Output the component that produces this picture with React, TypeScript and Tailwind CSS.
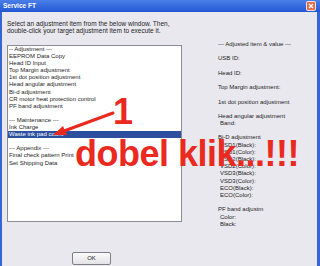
const listItems: { text: string; selected?: boolean }[] = [
  { text: "-- Adjustment ---" },
  { text: "EEPROM Data Copy" },
  { text: "Head ID Input" },
  { text: "Top Margin adjustment" },
  { text: "1st dot position adjustment" },
  { text: "Head angular adjustment" },
  { text: "Bi-d adjustment" },
  { text: "CR motor heat protection control" },
  { text: "PF band adjustment" },
  { text: "" },
  { text: "--- Maintenance ---" },
  { text: "Ink Charge" },
  { text: "Waste ink pad count", selected: true },
  { text: "" },
  { text: "--- Appendix ---" },
  { text: "Final check pattern Print" },
  { text: "Set Shipping Data" },
];

// indent: 0 = flush, 1 = slightly indented
const valueLines: [string, number][] = [
  ["--- Adjusted item & value ---", 0],
  ["", 0],
  ["USB ID:", 0],
  ["", 0],
  ["Head ID:", 0],
  ["", 0],
  ["Top Margin adjustment:", 0],
  ["", 0],
  ["1st dot position adjustment", 0],
  ["", 0],
  ["Head angular adjustment", 0],
  ["Band:", 1],
  ["", 0],
  ["Bi-D adjustment", 0],
  ["VSD1(Black):", 1],
  ["VSD1(Color):", 1],
  ["VSD2(Black):", 1],
  ["VSD2(Color):", 1],
  ["VSD3(Black):", 1],
  ["VSD3(Color):", 1],
  ["ECO(Black):", 1],
  ["ECO(Color):", 1],
  ["", 0],
  ["PF band adjustm", 0],
  ["Color:", 1],
  ["Black:", 1],
];

function CloseButton() {
  return (
    <div className="w-[10px] h-[10px] rounded-[2px] border border-white/80 bg-[#dd6a48] flex items-center justify-center">
      <svg width="6" height="6" viewBox="0 0 6 6">
        <path d="M1 1L5 5M5 1L1 5" stroke="white" strokeWidth="1.4" />
      </svg>
    </div>
  );
}

export default function App() {
  return (
    <div className="relative w-[320px] h-[266px] overflow-hidden bg-[#e9e8ee] font-['Liberation_Sans',Arial,sans-serif] text-[#1e1e1e]">
      {/* title bar */}
      <div className="h-[12px] flex items-center justify-between pl-[3px] pr-[4px] bg-gradient-to-b from-[#4a7fea] to-[#2356d2]">
        <span className="text-[6.5px] font-bold text-white leading-none">Service FT</span>
        <CloseButton />
      </div>

      <div className="h-[254px] flex flex-col border-l-[2px] border-r-[3px] border-[#3566d8] pl-[5px] pt-[8px]">
        <p className="text-[6.5px] leading-[7px] whitespace-nowrap">
          Select an adjustment item from the below window. Then,
          <br />
          double-click your target adjustment item to execute it.
        </p>

        <div className="flex items-start mt-[7px]">
          <div className="mt-[4px] w-[175px] h-[177px] bg-white border border-[#8a8d97] text-[6px] leading-[7.1px]">
            {listItems.map((item, i) => (
              <div
                key={i}
                className={
                  item.selected
                    ? "h-[7.1px] pl-[1px] bg-[#2c4f9e] text-white whitespace-nowrap"
                    : "h-[7.1px] pl-[1px] whitespace-nowrap"
                }
              >
                {item.text}
              </div>
            ))}
          </div>

          <div className="ml-[36px] text-[6px] leading-[7.2px]">
            {valueLines.map(([t, indent], i) => (
              <div key={i} className={indent ? "h-[7.2px] pl-[2px] whitespace-nowrap" : "h-[7.2px] whitespace-nowrap"}>
                {t}
              </div>
            ))}
          </div>
        </div>

        <button className="mt-[24px] ml-[65px] w-[39px] h-[13px] border border-[#7d7f88] rounded-[2px] bg-gradient-to-b from-[#fbfbfb] to-[#e4e3e8] text-[6px] leading-none flex items-center justify-center">
          OK
        </button>
      </div>

      {/* red annotations drawn over the screenshot */}
      <svg className="absolute left-0 top-0" width="320" height="266" viewBox="0 0 320 266">
        <line x1="113" y1="113" x2="64" y2="131" stroke="#ea2a1f" strokeWidth="3" strokeLinecap="round" />
        <polygon points="53,135 63,126 67,135" fill="#ea2a1f" />
      </svg>
      <span className="absolute left-[113px] top-[94px] text-[36px] leading-[36px] font-bold text-[#ea2a1f]">1</span>
      <span className="absolute left-[75px] top-[136px] text-[36px] leading-[36px] font-bold tracking-[-0.5px] text-[#ea2a1f] whitespace-nowrap">
        dobel klik...!!!
      </span>
    </div>
  );
}
